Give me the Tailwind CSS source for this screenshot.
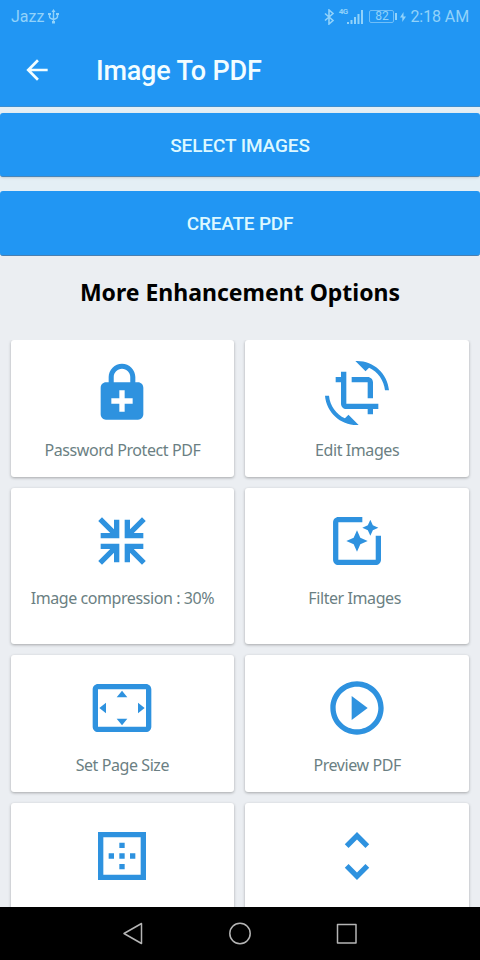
<!DOCTYPE html>
<html lang="en">
<head>
    <meta charset="UTF-8">
    <meta name="viewport" content="width=device-width, initial-scale=1.0">
    <title>Image To PDF</title>
    <script src="https://cdn.jsdelivr.net/npm/@tailwindcss/browser@4"></script>
</head>
<body class="bg-[#ebeef2] font-['Roboto',sans-serif]">
    <div class="w-[480px] h-[960px] flex flex-col overflow-hidden">
        <!-- Status bar + toolbar -->
        <header class="h-[107px] shrink-0 bg-[#2196f3] border-b border-[#3d8fd0]">
            <div class="h-[33px] flex items-center justify-between pl-[11px] pr-[11px] text-[#91d2fa] text-base leading-8">
                <div class="flex items-center">
                    <span>Jazz</span>
                    <svg class="w-[11px] h-[15px] ml-[4px]" viewBox="0 0 11 15" fill="none" stroke="currentColor" stroke-width="1.4">
                        <path d="M5.5 2v10M1.5 5v2.5q0 2 4 3M9.5 5v2.5q0 2-4 3"/>
                        <path d="M5.5 0L3.5 3h4zM0 4h3v2H0zM8 4h3v2H8zM4 12h3v2.5H4z" fill="currentColor" stroke="none"/>
                    </svg>
                </div>
                <div class="flex items-center">
                    <svg class="w-[11px] h-[16px]" viewBox="0 0 11 16" fill="none" stroke="currentColor" stroke-width="1.6">
                        <path d="M1 4.5l8 7-4 3.5V1l4 3.5-8 7"/>
                    </svg>
                    <span class="text-[8px] leading-none font-bold ml-[4px] mb-[9px] tracking-[-0.7px]">4G</span>
                    <svg class="w-[16px] h-[15px]" viewBox="0 0 16 15" fill="currentColor">
                        <path d="M0 13h2v2H0zM3.500 11h2v4h-2zM7 8h2v7H7zM10.500 5h2v10h-2zM14 1h2v14h-2z"/>
                    </svg>
                    <span class="ml-[6px] w-[25px] h-[13px] border border-[#6fbef8] rounded-[2px] text-[12px] leading-[11px] text-center">82</span>
                    <span class="w-[2px] h-[7px] bg-[#91d2fa] ml-px"></span>
                    <svg class="w-[6px] h-[10px] ml-[3px] mr-[4px]" viewBox="0 0 6 10" fill="currentColor">
                        <path d="M3.500 0L0 5.500h2.300V10L6 4.500H3.500z"/>
                    </svg>
                    <span class="tracking-[-0.1px]">2:18 AM</span>
                </div>
            </div>
            <div class="h-[76px] flex items-center pl-[21px]">
                <svg class="w-8 h-8 -mt-[3px]" viewBox="0 0 24 24" fill="#f2fdff">
                    <path d="M20 11H7.830l5.590-5.590L12 4l-8 8 8 8 1.410-1.410L7.830 13H20v-2z"/>
                </svg>
                <h1 class="ml-[43px] text-[27px] leading-8 font-medium tracking-[-0.2px] text-[#f2fdff]">Image To PDF</h1>
            </div>
        </header>
        <!-- Main actions -->
        <div class="flex flex-col gap-[14px] pt-[6px] bg-[#e4eff5]">
            <button class="h-[64px] w-full pt-[3px] rounded-[3px] bg-[#2196f3] border-b border-[#4a86b8] text-[19px] font-medium tracking-[-0.1px] text-[#dcf8ff] shadow-sm">SELECT IMAGES</button>
            <button class="h-[65px] w-full pt-[2px] rounded-[3px] bg-[#2196f3] border-b border-[#4a7fb0] text-[19px] font-medium tracking-[-0.2px] text-[#dcf8ff]">CREATE PDF</button>
        </div>
        <h2 class="h-[83.5px] shrink-0 pt-[20px] text-center font-['Noto_Sans',sans-serif] text-[23px] leading-8 font-bold text-black">More Enhancement Options</h2>
        <!-- Options grid -->
        <main class="flex-1 min-h-0 overflow-hidden grid grid-cols-2 gap-[11px] pl-[10.5px] pr-[11px] auto-rows-max content-start text-[#6b7f83] fill-[#2e92df] font-['Noto_Sans',sans-serif] text-base leading-6 tracking-[-0.42px]">
            <div class="h-[137px] bg-white rounded-[3px] shadow-[0_1px_3px_rgba(0,0,0,0.3)] flex flex-col items-center pt-[21px]">
                <svg class="w-16 h-16" viewBox="0 0 24 24"><path d="M18 8h-1V6c0-2.760-2.240-5-5-5S7 3.240 7 6v2H6c-1.100 0-2 .9-2 2v10c0 1.100.9 2 2 2h12c1.100 0 2-.9 2-2V10c0-1.100-.9-2-2-2zM8.900 6c0-1.710 1.390-3.100 3.100-3.100s3.100 1.390 3.100 3.100v2H8.900V6zM16 16h-3v3h-2v-3H8v-2h3v-3h2v3h3v2z"/></svg>
                <span class="mt-[13px]">Password Protect PDF</span>
            </div>
            <div class="h-[137px] bg-white rounded-[3px] shadow-[0_1px_3px_rgba(0,0,0,0.3)] flex flex-col items-center pt-[21px]">
                <svg class="w-16 h-16" viewBox="0 0 24 24"><path d="M7.470 21.490C4.200 19.930 1.860 16.760 1.500 13H0c.51 6.160 5.660 11 11.950 11 .23 0 .44-.02.66-.03L8.800 20.150l-1.330 1.340zM12.050 0c-.23 0-.44.02-.66.04l3.810 3.810 1.330-1.330C19.800 4.070 22.140 7.240 22.500 11H24c-.51-6.160-5.660-11-11.950-11zM16 14h2V8c0-1.110-.9-2-2-2h-6v2h6v6zm-8 2V4H6v2H4v2h2v8c0 1.100.89 2 2 2h8v2h2v-2h2v-2H8z"/></svg>
                <span class="mt-[13px]">Edit Images</span>
            </div>
            <div class="h-[156.5px] bg-white rounded-[3px] shadow-[0_1px_3px_rgba(0,0,0,0.3)] flex flex-col items-center pt-[21px]">
                <svg class="w-16 h-16" viewBox="0 0 24 24"><path d="M19.500 3.090L20.910 4.500 16.410 9H20v2h-7V4h2v3.590l4.500-4.500M20.910 19.500l-1.410 1.410-4.500-4.500V20h-2v-7h7v2h-3.590l4.500 4.500M4.500 3.090L9 7.590V4h2v7H4V9h3.590l-4.500-4.500L4.500 3.090M3.090 19.500L7.590 15H4v-2h7v7H9v-3.590l-4.500 4.500-1.410-1.410z"/></svg>
                <span class="mt-[13px]">Image compression : 30%</span>
            </div>
            <div class="h-[156.5px] bg-white rounded-[3px] shadow-[0_1px_3px_rgba(0,0,0,0.3)] flex flex-col items-center pt-[21px]">
                <svg class="w-16 h-16" viewBox="0 0 24 24"><path d="M19.020 10v9H5V5h9V3H5.020c-1.100 0-2 .9-2 2v14c0 1.100.9 2 2 2H19c1.100 0 2-.9 2-2v-9h-1.980zM17 10l.94-2.060L20 7l-2.060-.94L17 4l-.94 2.060L14 7l2.060.94L17 10zm-3.750.75L12 8l-1.250 2.750L8 12l2.750 1.250L12 16l1.250-2.750L16 12l-2.750-1.250z"/></svg>
                <span class="mt-[13px] pr-[5px]">Filter Images</span>
            </div>
            <div class="h-[137px] bg-white rounded-[3px] shadow-[0_1px_3px_rgba(0,0,0,0.3)] flex flex-col items-center pt-[21px]">
                <svg class="w-16 h-16" viewBox="0 0 24 24"><path d="M12.010 5.500L10 8h4l-1.990-2.500zM18 10v4l2.500-1.990L18 10zM6 10l-2.500 2.010L6 14v-4zm8 6h-4l2.010 2.500L14 16zm7-13H3c-1.100 0-2 .9-2 2v14c0 1.100.9 2 2 2h18c1.100 0 2-.9 2-2V5c0-1.100-.9-2-2-2zm0 16.010H3V4.990h18v14.020z"/></svg>
                <span class="mt-[13px]">Set Page Size</span>
            </div>
            <div class="h-[137px] bg-white rounded-[3px] shadow-[0_1px_3px_rgba(0,0,0,0.3)] flex flex-col items-center pt-[21px]">
                <svg class="w-16 h-16" viewBox="0 0 24 24"><path d="M10 16.500l6-4.500-6-4.500v9zM12 2C6.480 2 2 6.480 2 12s4.480 10 10 10 10-4.480 10-10S17.520 2 12 2zm0 18c-4.410 0-8-3.590-8-8s3.590-8 8-8 8 3.590 8 8-3.590 8-8 8z"/></svg>
                <span class="mt-[13px]">Preview PDF</span>
            </div>
            <div class="h-[137px] bg-white rounded-[3px] shadow-[0_1px_3px_rgba(0,0,0,0.3)] flex flex-col items-center pt-[21px]">
                <svg class="w-16 h-16" viewBox="0 0 24 24"><path d="M13 7h-2v2h2V7zm0 4h-2v2h2v-2zm4 0h-2v2h2v-2zM3 3v18h18V3H3zm16 16H5V5h14v14zm-6-4h-2v2h2v-2zm-4-4H7v2h2v-2z"/></svg>
            </div>
            <div class="h-[137px] bg-white rounded-[3px] shadow-[0_1px_3px_rgba(0,0,0,0.3)] flex flex-col items-center pt-[21px]">
                <svg class="w-16 h-16" viewBox="0 0 24 24"><path d="M12 5.830L15.170 9l1.410-1.410L12 3 7.410 7.590 8.830 9 12 5.830zm0 12.340L8.830 15l-1.410 1.410L12 21l4.590-4.590L15.170 15 12 18.170z"/></svg>
            </div>
        </main>
        <!-- Android navigation bar -->
        <nav class="h-[53px] shrink-0 bg-black flex justify-center items-center gap-[83px]">
            <svg class="w-6 h-6" viewBox="0 0 24 24" fill="none" stroke="#b5b5b5" stroke-width="1.500" stroke-linejoin="round"><path d="M20.500 1.500v20L3 11.500z"/></svg>
            <svg class="w-6 h-6" viewBox="0 0 24 24" fill="none" stroke="#b5b5b5" stroke-width="1.500"><circle cx="12" cy="11.500" r="10.200"/></svg>
            <svg class="w-6 h-6" viewBox="0 0 24 24" fill="none" stroke="#b5b5b5" stroke-width="1.500" stroke-linejoin="round"><path d="M2.500 2.500h18.500v18.500H2.500z"/></svg>
        </nav>
    </div>
</body>
</html>
